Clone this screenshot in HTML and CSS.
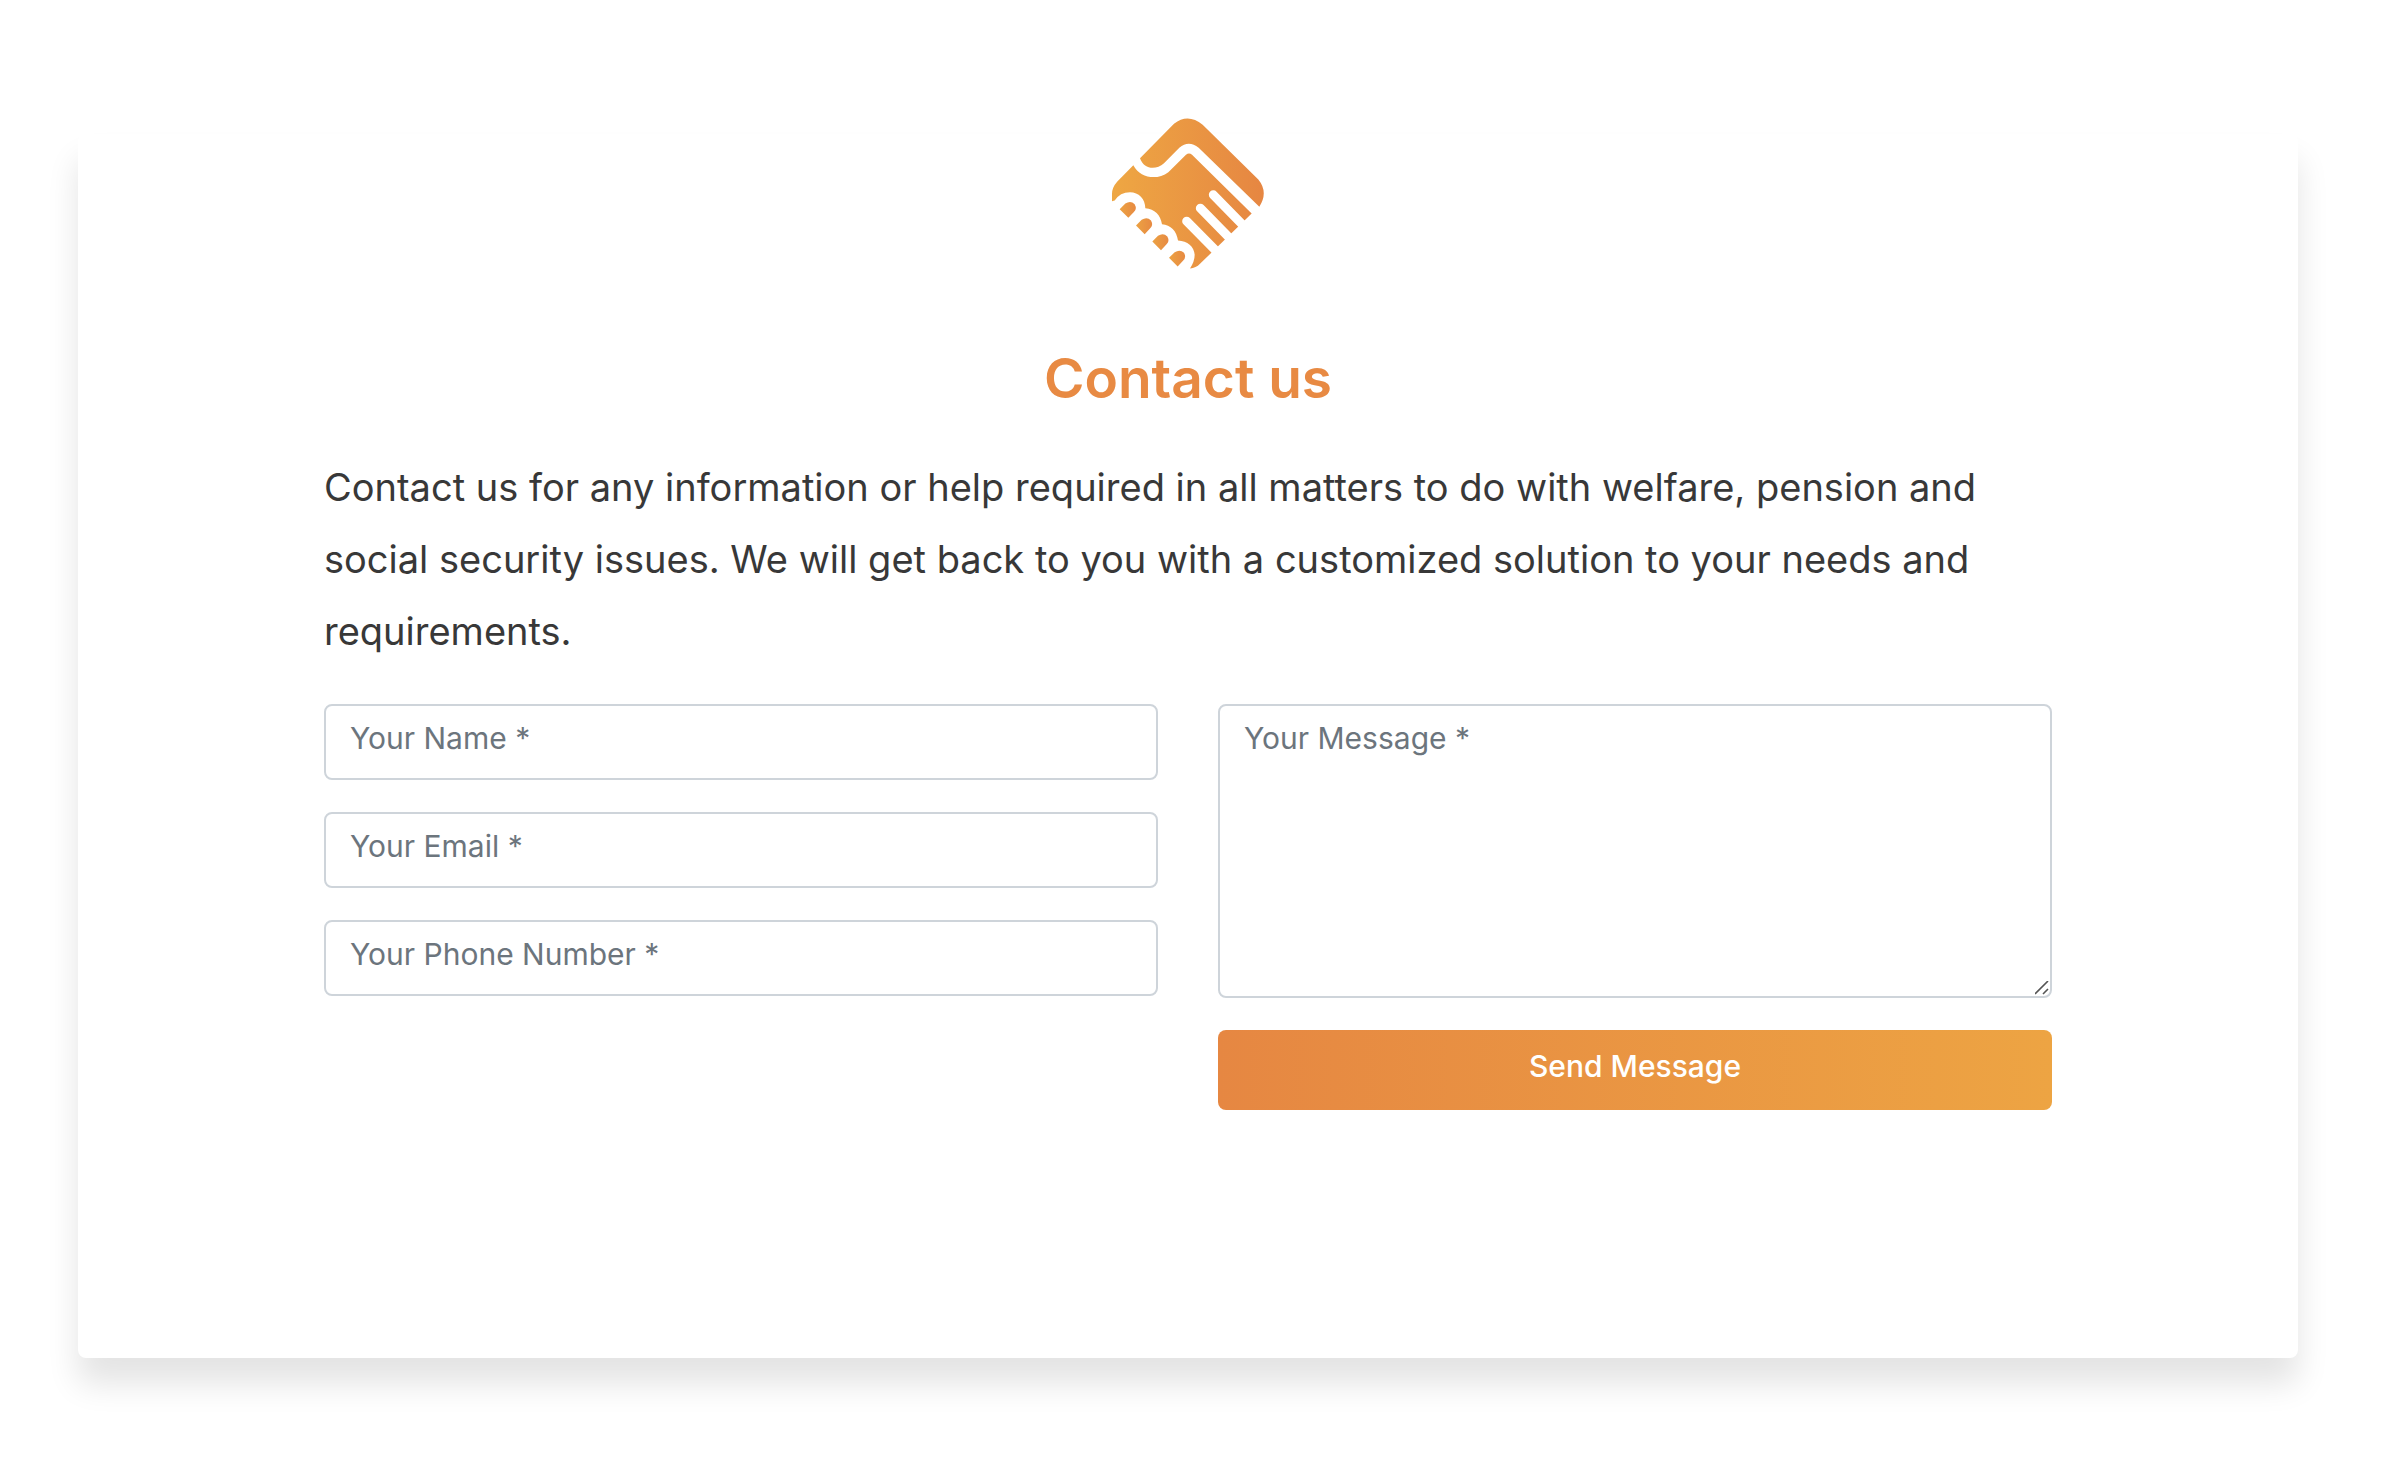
FILE: index.html
```html
<!DOCTYPE html>
<html lang="en">
<head>
<meta charset="utf-8">
<meta name="viewport" content="width=device-width, initial-scale=1">
<title>Contact us</title>
<link rel="stylesheet" href="styles.css">
</head>
<body>
<main class="contact-card">
  <svg class="logo" viewBox="36 38 456 452" role="img" aria-label="Handshake logo">
    <defs>
      <linearGradient id="brand" gradientUnits="userSpaceOnUse" x1="36" y1="0" x2="492" y2="0">
        <stop offset="0" stop-color="#eea743"/>
        <stop offset="1" stop-color="#e68642"/>
      </linearGradient>
      <linearGradient id="fingertip">
        <stop offset="0" stop-color="#eca243"/>
        <stop offset="1" stop-color="#e78a42"/>
      </linearGradient>
    </defs>
    <g fill="url(#brand)">
      <path d="M120 158L222 55Q264 22 308 58L475 222Q506 260 478 304L296 127Q266 103 238 127L192 173C168 194 132 192 120 158Z"/>
      <path d="M100 179C120 217 170 226 205 200L258 148Q267 140 276 148L455 324L300 475Q288 488 270 489Q284 468 284 448C283 424 262 406 234 405C230 376 212 358 186 356C182 328 164 310 136 308C136 280 116 260 90 260Q60 260 44 285L36 287V265Q36 246 52 228Z"/>
    </g>
    <g fill="url(#fingertip)">
      <path id="tip" d="M59 311L76 294Q92 284 104 296Q112 310 101 320L85 337Z"/>
      <use href="#tip" x="49" y="49"/>
      <use href="#tip" x="98" y="97"/>
      <use href="#tip" x="148" y="146"/>
    </g>
    <path d="M340 268L434 364M301 308L395 404M260 347L355 443" fill="none" stroke="#fff" stroke-width="27" stroke-linecap="round"/>
  </svg>
  <form class="contact-form">
    <h1 class="title">Contact us</h1>
    <p class="intro">Contact us for any information or help required in all matters to do with welfare, pension and social security issues. We will get back to you with a customized solution to your needs and requirements.</p>
    <div class="fields">
      <div class="column">
        <input class="control" type="text" name="name" placeholder="Your Name *" aria-label="Your Name">
        <input class="control" type="email" name="email" placeholder="Your Email *" aria-label="Your Email">
        <input class="control" type="tel" name="phone" placeholder="Your Phone Number *" aria-label="Your Phone Number">
      </div>
      <div class="column">
        <textarea class="control message" name="message" placeholder="Your Message *" aria-label="Your Message"></textarea>
        <button class="send" type="submit">Send Message</button>
      </div>
    </div>
  </form>
</main>
</body>
</html>
```
FILE: styles.css
```css
* {
  box-sizing: border-box;
}

body {
  margin: 0;
  padding: 134px 98px 106px 78px;
  background: #fff;
  color: #383838;
  font-family: Inter, "Liberation Sans", sans-serif;
}

.contact-card {
  display: flex;
  flex-direction: column;
  align-items: center;
  padding: 0 246px 248px;
  border-radius: 8px;
  background: #fff;
  box-shadow: 0 26px 32px rgba(0, 0, 0, 0.11);
}

.logo {
  width: 152px;
  height: 151px;
  margin-top: -16px;
}

.contact-form {
  width: 100%;
  margin-top: 76px;
}

.title {
  margin: 0;
  color: #e88a43;
  font-size: 55px;
  font-weight: 600;
  line-height: 66px;
  text-align: center;
}

.intro {
  margin: 40px 0 37px;
  font-size: 38px;
  line-height: 72px;
}

.fields {
  display: grid;
  grid-template-columns: 1fr 1fr;
  gap: 60px;
}

.column {
  display: flex;
  flex-direction: column;
  gap: 32px;
}

.control {
  width: 100%;
  height: 76px;
  padding: 10px 24px 18px;
  border: 2px solid #ced4da;
  border-radius: 8px;
  background: #fff;
  color: #495057;
  font: inherit;
  font-size: 30px;
  line-height: 44px;
}

.control::placeholder {
  color: #6c757d;
  opacity: 1;
}

.message {
  display: block;
  height: 294px;
  resize: vertical;
}

.message::-webkit-resizer {
  background: url("data:image/svg+xml,%3Csvg xmlns='http://www.w3.org/2000/svg' viewBox='0 0 15 15'%3E%3Cpath d='M0 13L13 0M8 13L13 8' fill='none' stroke='%23555' stroke-width='1.6'/%3E%3C/svg%3E") no-repeat;
}

.send {
  height: 80px;
  padding: 0 24px 8px;
  border: 0;
  border-radius: 8px;
  background: linear-gradient(to right, #e68742, #eda443);
  color: #fff;
  font: inherit;
  font-size: 30px;
  font-weight: 500;
  cursor: pointer;
}
```
